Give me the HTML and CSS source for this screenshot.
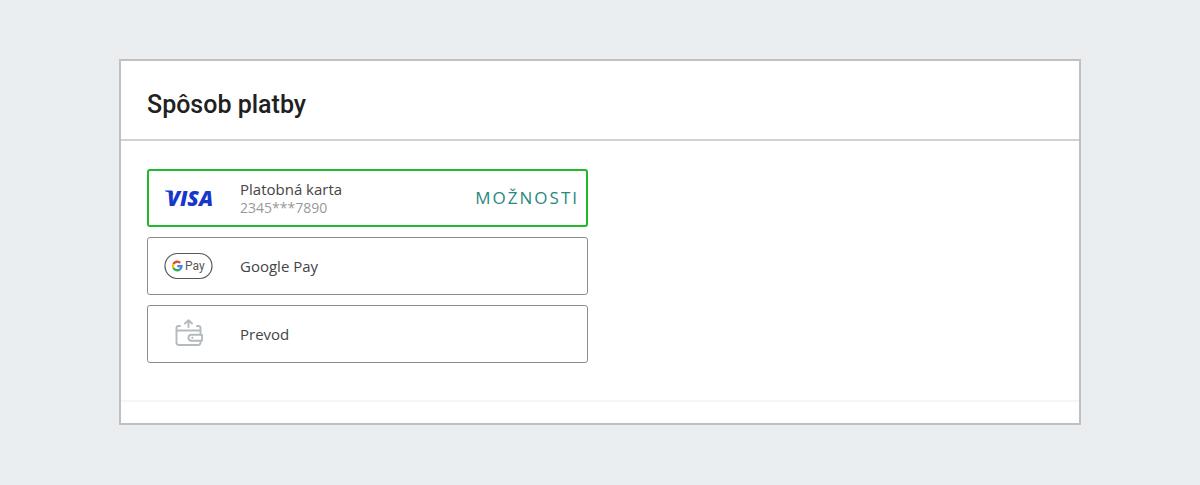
FILE: index.html
```html
<!DOCTYPE html>
<html lang="sk">
<head>
<meta charset="utf-8">
<meta name="viewport" content="width=device-width, initial-scale=1">
<title>Spôsob platby</title>
<link rel="stylesheet" href="styles.css">
</head>
<body>
<main class="panel">
  <header class="panel-header"><h1 class="panel-title">Spôsob platby</h1></header>
  <form class="methods">
    <div class="method">
      <input class="method-radio" type="radio" name="method" id="card" checked>
      <label class="method-label" for="card">
        <svg class="method-logo" viewBox="0 0 50 28" aria-hidden="true">
          <path class="visa-ink" d="M1 6.500H8L9.500 11Q5.500 7.700 1 7.200Z"/>
          <text class="visa-ink visa-text" x="3" y="22">VISA</text>
        </svg>
        <span class="method-text">
          <span class="method-name">Platobná karta</span>
          <span class="method-detail">2345***7890</span>
        </span>
      </label>
      <button class="method-options" type="button">MOŽNOSTI</button>
    </div>
    <div class="method">
      <input class="method-radio" type="radio" name="method" id="gpay">
      <label class="method-label" for="gpay">
        <svg class="method-logo" viewBox="0 0 50 28" aria-hidden="true">
          <rect x="1" y="1.500" width="47" height="25" rx="12.500" fill="#fff" stroke="#55585b" stroke-width="1.200"/>
          <g fill="none" stroke-width="2.300">
            <path stroke="#ea4335" d="M16.200 10.900A4.300 4.300 0 0 0 9.400 12"/>
            <path stroke="#fbbc04" d="M9.400 12A4.300 4.300 0 0 0 9.400 16"/>
            <path stroke="#34a853" d="M9.400 16A4.300 4.300 0 0 0 15.900 17.300"/>
            <path stroke="#4285f4" d="M15.900 17.300A4.300 4.300 0 0 0 17.500 14.100H13.200"/>
          </g>
          <text class="gpay-text" x="21" y="18">Pay</text>
        </svg>
        <span class="method-text"><span class="method-name">Google Pay</span></span>
      </label>
    </div>
    <div class="method">
      <input class="method-radio" type="radio" name="method" id="transfer">
      <label class="method-label" for="transfer">
        <svg class="method-logo" viewBox="0 0 50 28" aria-hidden="true">
          <g fill="none" stroke="#b3bbbe" stroke-width="1.900" stroke-linecap="round" stroke-linejoin="round">
            <path d="M16 6H14.500Q12.500 6 12.500 8V22.500Q12.500 25 15 25H34Q36.500 25 36.500 22.500V21.500M33 6H34.500Q36.500 6 36.500 8V14.500"/>
            <path d="M12.500 10.500H36.500M24.500 7V.5M21 3.500L24.500.2L28 3.500"/>
            <path d="M38 14.700H27.500Q24.500 14.700 24.500 17.700T27.500 20.700H38Z"/>
            <path d="M28.200 17.700H28.600"/>
          </g>
        </svg>
        <span class="method-text"><span class="method-name">Prevod</span></span>
      </label>
    </div>
  </form>
  <footer class="panel-footer"></footer>
</main>
</body>
</html>
```

FILE: styles.css
```css
* { box-sizing: border-box; }

body {
  margin: 0;
  padding: 59px 24px;
  background: #eaeef1;
  color: #444;
  font-family: "Open Sans", sans-serif;
}

.panel {
  max-width: 962px;
  margin: 0 auto;
  background: #fff;
  border: 2px solid #c0c0c0;
}

.panel-header {
  padding: 31px 26px 21px;
  border-bottom: 2px solid #d2d2d2;
}

.panel-title {
  margin: 0;
  color: #212121;
  font: 500 25px/26px Roboto, sans-serif;
}

.methods {
  display: grid;
  gap: 10px;
  max-width: 493px;
  padding: 28px 26px 37px;
}

.method {
  display: flex;
  align-items: center;
  min-height: 58px;
  padding: 0 8px 0 16px;
  border: 1px solid #8c8c8c;
  border-radius: 3px;
}

.method:has(.method-radio:checked) {
  border: 2px solid #20b92d;
  padding: 0 7px 0 15px;
}

.method:has(.method-radio:focus-visible) {
  outline: 2px solid #178a7c;
}

.method-radio {
  appearance: none;
  width: 0;
  height: 0;
  margin: 0;
  outline: 0;
}

.method-label {
  display: flex;
  flex: 1;
  align-items: center;
  gap: 26px;
  cursor: pointer;
}

.method-logo {
  width: 50px;
  height: 28px;
  overflow: visible;
}

.method-text {
  display: grid;
}

.method-name {
  font-size: 15px;
  line-height: 20px;
}

.method-detail {
  color: #999;
  font-size: 14px;
  line-height: 18px;
}

.method-options {
  padding: 0;
  border: 0;
  background: none;
  color: #27897e;
  font: 400 17px/24px "Open Sans", sans-serif;
  letter-spacing: 2px;
  cursor: pointer;
}

.visa-ink { fill: #1736ca; }

.visa-text {
  font: italic 800 21px "Open Sans", sans-serif;
}

.gpay-text {
  fill: #55585b;
  font: 400 12px Roboto, sans-serif;
}

.panel-footer {
  height: 23px;
  border-top: 2px solid #f5f5f5;
}
```
